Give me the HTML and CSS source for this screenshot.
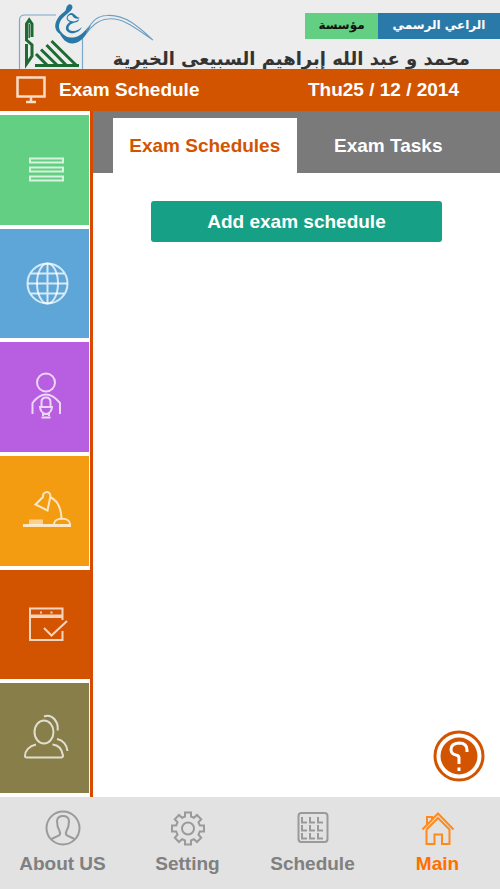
FILE: index.html
```html
<!DOCTYPE html>
<html lang="en">
<head>
    <meta charset="UTF-8">
    <meta name="viewport" content="width=device-width, initial-scale=1.0">
    <title>Exam Schedule</title>
    <link rel="stylesheet" href="styles.css">
</head>
<body>

    <!-- Sponsor banner -->
    <header class="banner">
        <svg class="banner-logo" viewBox="15 0 140 69" aria-hidden="true">
            <path d="M19.500 70V20Q19.500 15 25 15H56M82.500 34V70" fill="none" stroke="#7da8c9" stroke-width="1.200"/>
            <g fill="none" stroke="#1c6b33" stroke-width="3">
                <path d="M26.500 41V24L29.200 20L32 24V37M26.500 40L32 45V56L26.500 64V44"/>
                <path d="M36 54L48 66M41 49.500L58 66M46.500 45L67 66M51.500 41L77 66"/>
                <path d="M35 65.500H79"/>
            </g>
            <path d="M29.200 24V38" stroke="#1c6b33" stroke-width="1.500"/>
            <path d="M66 9C67 3 72 3 72.500 7C72.500 12 63 15 60 22C57 29 61 33 67 37C66 42 61 37 60 34C54 30 54 24 58 18C61 13 66 12 66 9Z" fill="#2878a8"/>
            <path d="M80 18C77 20 73 18 72 15C67 14 66 20 71 21C74 22 77 21 79 19C79 23 74 22 71 24C67 27 68 31 73 31C77 31 80 29 82 27C80 32 74 34 70 33C64 31 65 25 70 22C64 20 67 13 72 13C75 14 76 17 80 18Z" fill="#2878a8"/>
            <path d="M61 34C66 38 74 39 80 35C85 32 86 28 91 25C87 35 80 44 72 43.500C66 43 62 39 61 34Z" fill="#2878a8"/>
            <path d="M86 31C91 25 94 16 107 15.500C126 14 141 29 153 40C139 31 124 17 108 19C97 20 91 27 86 34" fill="none" stroke="#6fa0c4" stroke-width="1.100"/>
        </svg>
        <div class="sponsor" dir="rtl" lang="ar">
            <div class="sponsor-tags">
                <span class="tag tag-blue">الراعي الرسمي</span>
                <span class="tag tag-green">مؤسسة</span>
            </div>
            <p class="sponsor-name">محمد و عبد الله إبراهيم السبيعى الخيرية</p>
        </div>
    </header>

    <!-- Page title and date -->
    <div class="title-bar">
        <svg class="title-icon" viewBox="0 0 30 28" aria-hidden="true">
            <path d="M1.500 1.500H28.500V20.500H1.500ZM15 20.500V26M10 26H20" fill="none" stroke="#fbdcc8" stroke-width="2.500"/>
        </svg>
        <h1>Exam Schedule</h1>
        <time datetime="2014-12-25">Thu25 / 12 / 2014</time>
    </div>

    <div class="page">
        <nav class="sidebar" aria-label="Sections">
            <a href="#" class="side-item side-green" aria-label="List">
                <svg viewBox="0 0 50 50">
                    <path d="M8 13.500H41V17.500H8ZM8 22.500H41V26.500H8ZM8 31.500H41V35.500H8Z"/>
                </svg>
            </a>
            <a href="#" class="side-item side-blue" aria-label="Web">
                <svg viewBox="0 0 50 50">
                    <circle cx="25.500" cy="24.500" r="20"/>
                    <ellipse cx="25.500" cy="24.500" rx="10.500" ry="20"/>
                    <path d="M25.500 4.500V44.500M5.500 24.500H45.500M9 14.500H42M9 34.500H42"/>
                </svg>
            </a>
            <a href="#" class="side-item side-purple" aria-label="Speakers">
                <svg viewBox="0 0 50 50">
                    <circle cx="24" cy="10.500" r="9"/>
                    <path d="M10.500 42V31Q17 22.500 24 22.500T38 31V42"/>
                    <path d="M19.500 35V30Q19.500 25.500 24 25.500T28.500 30V35M18 35H30Q29.500 41 24 42Q18.500 41 18 35ZM21 41V44M27 41V44M19.500 45.500H28.500"/>
                </svg>
            </a>
            <a href="#" class="side-item side-yellow" aria-label="Study">
                <svg viewBox="0 0 50 50">
                    <path d="M21 12C20 5 28 4 28.500 10L25.500 24.500L13.500 18.500L21 11M28 11C35 14 39 22 39.500 32"/>
                    <path d="M32 38C32 31 48 31 48 38"/>
                    <path d="M1 39.500H49" stroke-width="3"/>
                    <path d="M7 36H21" stroke-width="5" opacity="0.700"/>
                </svg>
            </a>
            <a href="#" class="side-item side-orange active" aria-label="Exam schedule" aria-current="page">
                <svg viewBox="0 0 50 50">
                    <path d="M40.500 20V8.500H8V40H40.500V31M8 15.500H40.500M8 17H40.500M22 28L29.500 35.500L45 21"/>
                    <path d="M18 12.500H20M28.500 12.500H30.500" stroke-width="2"/>
                </svg>
            </a>
            <a href="#" class="side-item side-olive" aria-label="Users">
                <svg viewBox="0 0 50 50">
                    <ellipse cx="22" cy="19" rx="9.500" ry="11.500"/>
                    <path d="M14 31.500C7 33 3 38 3 43Q3 44.500 5 44.500H39Q41 44.500 41 42.500C40 36 36 32 30.500 31.500M22 3.500C30 0 37 9 35.500 17.500M35 26C41 27 45 32 45.500 38"/>
                </svg>
            </a>
        </nav>

        <main class="content">
            <div class="tabs" role="tablist">
                <button type="button" class="tab active" role="tab" aria-selected="true">Exam Schedules</button>
                <button type="button" class="tab" role="tab" aria-selected="false">Exam Tasks</button>
            </div>
            <div class="panel">
                <button type="button" class="btn-add">Add exam schedule</button>
            </div>
            <button type="button" class="btn-help" aria-label="Help">
                <svg viewBox="0 0 52 52" aria-hidden="true">
                    <circle cx="26" cy="26" r="24" fill="#fff" stroke="#d35400" stroke-width="3"/>
                    <circle cx="26" cy="26" r="18.500" fill="#d35400"/>
                    <path d="M34 22V20Q34 13 26 13Q18 13.500 18 19.500Q18 24 23 25Q26 25.500 26 28V34M26 37.500V41" fill="none" stroke="#fff" stroke-width="3"/>
                </svg>
            </button>
        </main>
    </div>

    <!-- Bottom menu -->
    <nav class="bottom-nav" aria-label="Main menu">
        <a href="#">
            <svg viewBox="0 0 36 36" aria-hidden="true">
                <circle cx="18" cy="18" r="16.500"/>
                <path d="M6.500 29L14 25.500Q16 24 14.500 21C12 17 12 13 12 11Q12.500 6 18 6T24 11C24 13 24 17 21.500 21Q20 24 22 25.500L29.500 29"/>
            </svg>
            <span>About US</span>
        </a>
        <a href="#">
            <svg viewBox="0 0 36 36" aria-hidden="true">
                <circle cx="18" cy="18.500" r="6"/>
                <path d="M15 2.500H21V6.500L24 7.800L27 5L31.200 9.200L28.500 12.300L29.800 15.500H34V21.500H29.800L28.500 24.700L31.200 27.800L27 32L24 29.200L21 30.500V34.500H15V30.500L12 29.200L9 32L4.800 27.800L7.500 24.700L6.200 21.500H2V15.500H6.200L7.500 12.300L4.800 9.200L9 5L12 7.800L15 6.500Z"/>
            </svg>
            <span>Setting</span>
        </a>
        <a href="#">
            <svg viewBox="0 0 36 36" aria-hidden="true">
                <rect x="3.500" y="3" width="29" height="29" rx="3"/>
                <path d="M7 7V12.500H12M15 7V12.500H20M23 7V12.500H28M7 15V20.500H12M15 15V20.500H20M23 15V20.500H28M7 23V28.500H12M15 23V28.500H20M23 23V28.500H28"/>
            </svg>
            <span>Schedule</span>
        </a>
        <a href="#" class="active" aria-current="page">
            <svg viewBox="0 0 36 36" aria-hidden="true">
                <path d="M2.500 19.500L18 3.500L33.500 19.500M6.500 19.500L18 8L29.500 19.500V34H22V24.500H14.500V34H6.500V19.500M7 14V7H12V9"/>
            </svg>
            <span>Main</span>
        </a>
    </nav>

</body>
</html>
```

FILE: styles.css
```css
* {
    margin: 0;
    padding: 0;
    box-sizing: border-box;
}

body {
    font-family: "Liberation Sans", Arial, sans-serif;
    font-size: 19px;
    font-weight: bold;
    line-height: 24px;
    background-color: #fff;
    display: flex;
    flex-direction: column;
    min-height: 100vh;
}

a {
    color: inherit;
    text-decoration: none;
}

button {
    font: inherit;
    border: none;
    cursor: pointer;
}

svg {
    display: block;
}

/* Banner */
.banner {
    display: flex;
    justify-content: space-between;
    height: 69px;
    padding-left: 15px;
    background-color: #ededed;
}

.banner-logo {
    width: 140px;
    height: 69px;
    margin-right: -50px;
    flex-shrink: 0;
}

.sponsor {
    padding-top: 13px;
    font-family: "DejaVu Sans", sans-serif;
    white-space: nowrap;
}

.sponsor-tags {
    display: flex;
    font-size: 12px;
}

.tag {
    height: 26px;
    text-align: center;
}

.tag-blue {
    width: 122px;
    background-color: #2a7aa9;
    color: #fff;
}

.tag-green {
    width: 73px;
    background-color: #62cf82;
    color: #111;
}

.sponsor-name {
    padding: 8px 30px 0 0;
    font-size: 18px;
    color: #333;
}

/* Title bar */
.title-bar {
    display: flex;
    align-items: center;
    height: 42px;
    padding: 0 41px 0 16px;
    background-color: #d35400;
    color: #fff;
}

.title-icon {
    width: 30px;
    height: 28px;
    margin-right: 13px;
}

.title-bar h1 {
    font-size: 19px;
}

.title-bar time {
    margin-left: auto;
}

/* Page */
.page {
    display: flex;
    flex: 1;
}

.sidebar {
    display: flex;
    flex-direction: column;
    gap: 4px;
    width: 93px;
    padding: 4px 0;
    border-right: 3px solid #d94a00;
}

.side-item {
    display: flex;
    flex: 1;
    align-items: center;
    justify-content: center;
    margin-right: 1px;
    padding-left: 4px;
}

.side-item.active {
    margin-right: 0;
}

.side-item svg {
    width: 50px;
    height: 50px;
    fill: none;
    stroke: rgba(255, 255, 255, 0.75);
    stroke-width: 2;
}

.side-green {
    background-color: #62cf82;
}

.side-blue {
    background-color: #5fa6d8;
}

.side-purple {
    background-color: #b75fe0;
}

.side-yellow {
    background-color: #f39c12;
}

.side-orange {
    background-color: #d35400;
}

.side-olive {
    background-color: #877e49;
}

.content {
    position: relative;
    flex: 1;
}

.tabs {
    display: flex;
    height: 62px;
    padding: 7px 20px 0;
    background-color: #7a7a7a;
}

.tab {
    flex: 1;
    background-color: transparent;
    color: #fff;
}

.tab.active {
    background-color: #fff;
    color: #d35400;
}

.panel {
    padding: 28px 58px;
}

.btn-add {
    width: 100%;
    height: 41px;
    border-radius: 3px;
    background-color: #16a085;
    color: #fff;
}

.btn-help {
    position: absolute;
    right: 15px;
    bottom: 15px;
    width: 52px;
    height: 52px;
    border-radius: 50%;
    background-color: transparent;
}

/* Bottom menu */
.bottom-nav {
    display: flex;
    height: 92px;
    padding-top: 13px;
    background-color: #e2e2e2;
    color: #808080;
}

.bottom-nav a {
    display: flex;
    flex: 1;
    flex-direction: column;
    align-items: center;
    gap: 6px;
}

.bottom-nav svg {
    width: 36px;
    height: 36px;
    fill: none;
    stroke: #9a9a9a;
    stroke-width: 2;
}

.bottom-nav .active {
    color: #ff6f00;
}

.bottom-nav .active svg {
    stroke: #ff8a1c;
}
```
